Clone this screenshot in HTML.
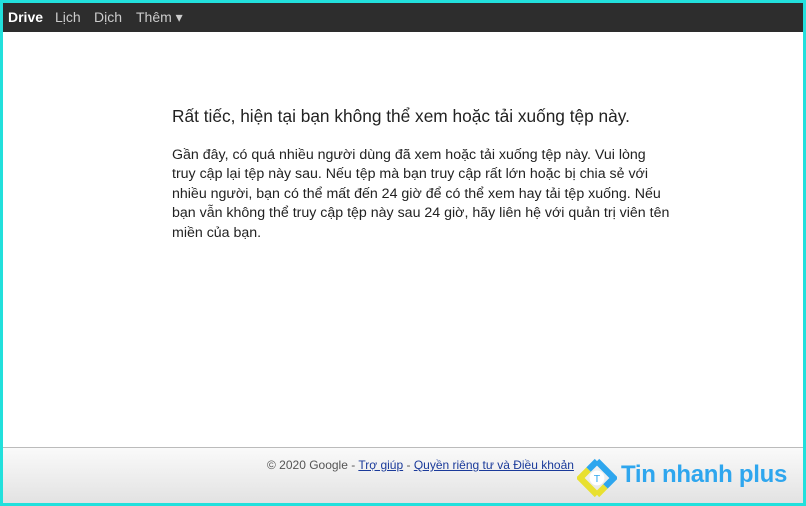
<!DOCTYPE html>
<html><head><meta charset="utf-8"><style>
html,body{margin:0;padding:0;}
body{width:806px;height:506px;background:#22e0dc;position:relative;overflow:hidden;font-family:"Liberation Sans",Arial,sans-serif;}
#inner{position:absolute;left:3px;top:3px;width:800px;height:500px;background:#fff;overflow:hidden;}
#bar{position:absolute;left:0;top:0;width:800px;height:29px;background:#2d2d2d;}
#bar span{position:absolute;top:6px;font-size:14px;color:#ccc;}
h1{position:absolute;left:169px;top:103px;margin:0;font-weight:normal;font-size:17.3px;color:#222;white-space:nowrap;}
p{position:absolute;left:169px;top:143px;width:499px;margin:0;font-size:14.2px;line-height:19.4px;color:#222;}
#foot{position:absolute;left:0;top:444px;width:800px;height:56px;border-top:1px solid #bbb;background:linear-gradient(#fafafa,#e2e2e2);}
#copy{position:absolute;left:264px;top:10px;font-size:12px;color:#555;white-space:nowrap;}
#copy a{color:#1a3a9a;text-decoration:underline;}
#logo{position:absolute;left:574px;top:10px;}
#logotext{position:absolute;left:618px;top:13px;font-size:24px;font-weight:bold;color:#2ea6ee;white-space:nowrap;letter-spacing:-0.3px;}
</style></head><body><div id="inner">
<div id="bar">
<span style="left:5px;color:#fff;font-weight:bold">Drive</span>
<span style="left:52px">Lịch</span>
<span style="left:91px">Dịch</span>
<span style="left:133px">Thêm ▾</span>
</div>
<h1>Rất tiếc, hiện tại bạn không thể xem hoặc tải xuống tệp này.</h1>
<p>Gần đây, có quá nhiều người dùng đã xem hoặc tải xuống tệp này. Vui lòng truy cập lại tệp này sau. Nếu tệp mà bạn truy cập rất lớn hoặc bị chia sẻ với nhiều người, bạn có thể mất đến 24 giờ để có thể xem hay tải tệp xuống. Nếu bạn vẫn không thể truy cập tệp này sau 24 giờ, hãy liên hệ với quản trị viên tên miền của bạn.</p>
<div id="foot">
<div id="copy">© 2020 Google - <a>Trợ giúp</a> - <a>Quyền riêng tư và Điều khoản</a></div>
<svg id="logo" width="40" height="40" viewBox="0 0 38 38">
<path d="M19 3 L35 19 L27 27" fill="none" stroke="#2ea6ee" stroke-width="6"/>
<path d="M19 35 L3 19 L11 11" fill="none" stroke="#e8e030" stroke-width="6"/>
<path d="M11 11 L19 3" stroke="#2ea6ee" stroke-width="6"/>
<path d="M27 27 L19 35" stroke="#e8e030" stroke-width="6"/>
<circle cx="19" cy="19" r="7" fill="#fff"/>
<text x="19" y="23" font-size="10" text-anchor="middle" fill="#2ea6ee" font-family="Liberation Sans">T</text>
</svg>
<div id="logotext">Tin nhanh plus</div>
</div>
</div></body></html>
